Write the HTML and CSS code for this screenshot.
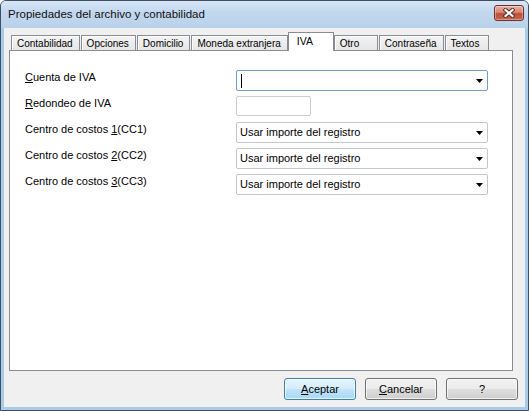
FILE: index.html
```html
<!DOCTYPE html>
<html lang="es">
<head>
    <meta charset="UTF-8">
    <title>Propiedades del archivo y contabilidad</title>
    <link rel="stylesheet" href="styles.css">
</head>
<body>
    <div class="window">
        <!-- Title bar -->
        <div class="titlebar">
            <span class="title">Propiedades del archivo y contabilidad</span>
            <button class="close-btn" type="button">
                <svg width="12" height="10" viewBox="0 0 12 10">
                    <path d="M2.5 2 L9.5 8 M9.5 2 L2.5 8" stroke="#5a2a22" stroke-width="4" stroke-linecap="square"/>
                    <path d="M2.5 2 L9.5 8 M9.5 2 L2.5 8" stroke="#ffffff" stroke-width="2.2" stroke-linecap="square"/>
                </svg>
            </button>
        </div>

        <div class="dialog">
            <!-- Tabs -->
            <ul class="tabs">
                <li class="tab">Contabilidad</li>
                <li class="tab">Opciones</li>
                <li class="tab">Domicilio</li>
                <li class="tab">Moneda extranjera</li>
                <li class="tab active">IVA</li>
                <li class="tab">Otro</li>
                <li class="tab">Contraseña</li>
                <li class="tab">Textos</li>
            </ul>

            <!-- IVA page -->
            <div class="panel">
                <div class="form-grid">
                    <label class="field-label"><u>C</u>uenta de IVA</label>
                    <div class="combo focused">
                        <span class="caret"></span>
                        <svg class="arrow" width="7" height="4" viewBox="0 0 7 4"><path d="M0 0 H7 L3.5 4 Z" fill="#000"/></svg>
                    </div>

                    <label class="field-label"><u>R</u>edondeo de IVA</label>
                    <div class="textbox"></div>

                    <label class="field-label">Centro de costos <u>1</u>(CC1)</label>
                    <div class="combo">
                        <span class="combo-text">Usar importe del registro</span>
                        <svg class="arrow" width="7" height="4" viewBox="0 0 7 4"><path d="M0 0 H7 L3.5 4 Z" fill="#000"/></svg>
                    </div>

                    <label class="field-label">Centro de costos <u>2</u>(CC2)</label>
                    <div class="combo">
                        <span class="combo-text">Usar importe del registro</span>
                        <svg class="arrow" width="7" height="4" viewBox="0 0 7 4"><path d="M0 0 H7 L3.5 4 Z" fill="#000"/></svg>
                    </div>

                    <label class="field-label">Centro de costos <u>3</u>(CC3)</label>
                    <div class="combo">
                        <span class="combo-text">Usar importe del registro</span>
                        <svg class="arrow" width="7" height="4" viewBox="0 0 7 4"><path d="M0 0 H7 L3.5 4 Z" fill="#000"/></svg>
                    </div>
                </div>
            </div>

            <!-- Dialog buttons -->
            <div class="actions">
                <button class="btn default" type="button"><u>A</u>ceptar</button>
                <button class="btn" type="button"><u>C</u>ancelar</button>
                <button class="btn" type="button">?</button>
            </div>
        </div>
    </div>
</body>
</html>
```

FILE: styles.css
```css
* {
    box-sizing: border-box;
}
body {
    margin: 0;
    font-family: "Liberation Sans", Arial, sans-serif;
    font-size: 11px;
    color: #000;
    background: #ffffff;
}
.window {
    width: 529px;
    height: 411px;
    border: 1px solid #3d4f63;
    border-radius: 6px 6px 0 0;
    background: #a9cbea;
    display: flex;
    flex-direction: column;
}
.titlebar {
    height: 27px;
    display: flex;
    align-items: flex-start;
    justify-content: space-between;
    padding: 0 4px 0 7px;
    border-radius: 5px 5px 0 0;
    background: linear-gradient(#d7e6f6, #c3d8ee 40%, #b9d1ea);
}
.title {
    font-size: 11.5px;
    line-height: 26px;
    color: #111;
}
.close-btn {
    margin-top: 4px;
    width: 30px;
    height: 16px;
    padding: 0;
    border: 1px solid #6e3229;
    border-radius: 3px;
    background: linear-gradient(#eab3a6, #d78574 45%, #c04b35 55%, #c8664f);
    box-shadow: inset 0 0 0 1px rgba(255,255,255,0.35);
    display: flex;
    align-items: center;
    justify-content: center;
}
.dialog {
    flex: 1;
    margin: 0 3px 3px 3px;
    background: #f0f0f0;
    padding: 4px 5px 0 5px;
}
.tabs {
    list-style: none;
    margin: 0 0 0 2px;
    padding: 0;
    display: flex;
    align-items: flex-end;
    gap: 1px;
}
.tab {
    height: 15px;
    min-width: 44px;
    padding: 1px 6px 0 5px;
    font-size: 10px;
    line-height: 13px;
    border: 1px solid #898c95;
    border-bottom: none;
    background: linear-gradient(#f4f4f4, #e6e6e6);
    box-shadow: inset 1px 1px 0 #fcfcfc;
}
.tab.active {
    position: relative;
    z-index: 1;
    height: 19px;
    min-width: 46px;
    margin: 0 -1px -1px -1px;
    padding: 1px 8px 0 8px;
    line-height: 14px;
    font-size: 10.5px;
    background: #ffffff;
    box-shadow: none;
}
.panel {
    width: 504px;
    height: 321px;
    background: #ffffff;
    border: 1px solid #898c95;
    padding: 19px 15px;
}
.form-grid {
    display: grid;
    grid-template-columns: 211px 252px;
    grid-auto-rows: 21px;
    row-gap: 5px;
}
.field-label {
    line-height: 15px;
}
.combo {
    position: relative;
    border: 1px solid #c3c6cc;
    border-radius: 2px;
    background: #fff;
    display: flex;
    align-items: center;
    padding-left: 3px;
}
.combo.focused {
    border-color: #6d9ed6;
}
.combo-text {
    line-height: 19px;
}
.caret {
    width: 1px;
    height: 14px;
    margin-left: 1px;
    background: #000;
}
.arrow {
    position: absolute;
    right: 4px;
    top: 8px;
}
.textbox {
    width: 75px;
    height: 20px;
    border: 1px solid #c9ccd1;
    border-radius: 2px;
    background: #fff;
}
.actions {
    display: flex;
    justify-content: flex-end;
    gap: 9px;
    margin-top: 7px;
    padding-right: 2px;
}
.btn {
    width: 72px;
    height: 22px;
    padding: 0;
    font-family: "Liberation Sans", Arial, sans-serif;
    font-size: 11px;
    color: #000;
    border: 1px solid #707070;
    border-radius: 3px;
    background: linear-gradient(#f2f2f2 0%, #ebebeb 48%, #dddddd 52%, #cfcfcf 100%);
    box-shadow: inset 0 0 0 1px rgba(255,255,255,0.7);
}
.btn.default {
    border-color: #3c7fb1;
    background: linear-gradient(#e5f4fc 0%, #d6ecf9 48%, #c1e3f8 52%, #a9d8f5 100%);
}
```
